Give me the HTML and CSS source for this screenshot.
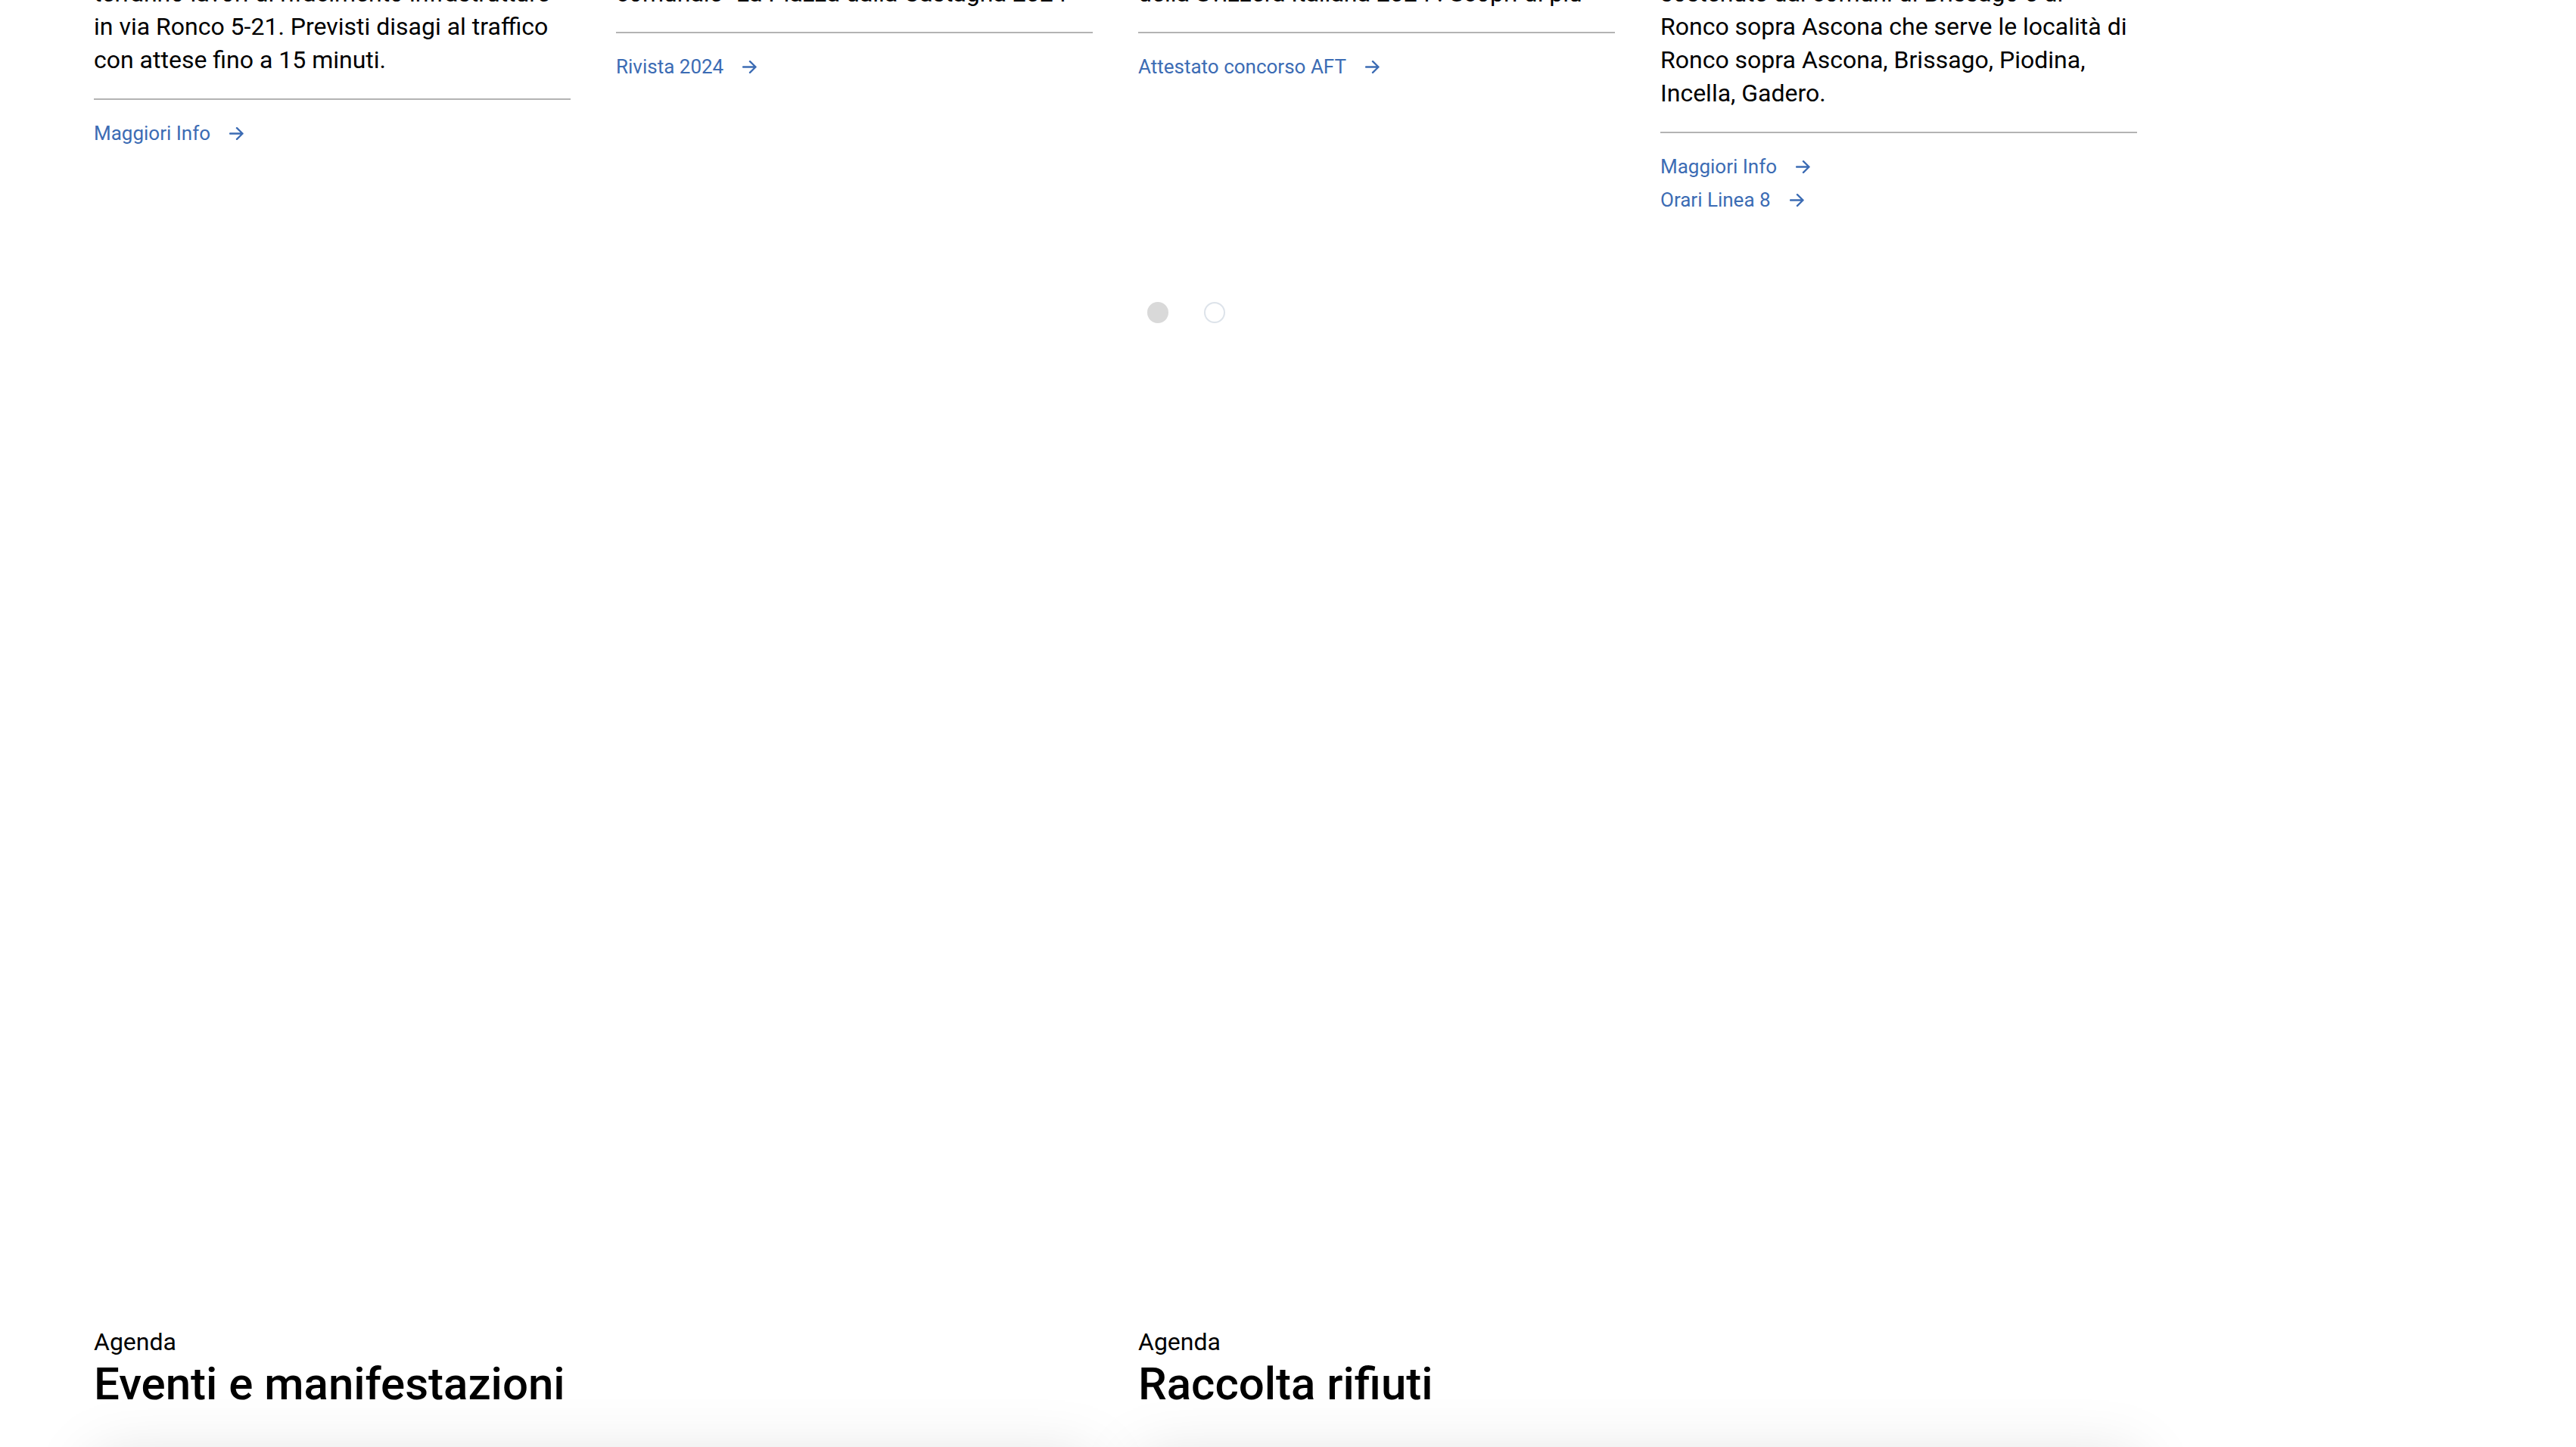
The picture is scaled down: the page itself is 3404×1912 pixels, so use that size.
FILE: index.html
```html
<!DOCTYPE html>
<html lang="it">
<head>
<meta charset="utf-8">
<title>Ronco sopra Ascona</title>
<link rel="stylesheet" href="styles.css">
</head>
<body>
<main class="page">
  <section class="news">
    <article class="card">
      <p class="card-text">terranno lavori di rifacimento infrastrutture in via Ronco 5-21. Previsti disagi al traffico con attese fino a 15 minuti.</p>
      <div class="divider"></div>
      <ul class="links">
        <li><a class="link" href="#">Maggiori Info<svg class="arrow" viewBox="0 0 19 17"><path d="M1 8.5H17.5M10 1.2L17.5 8.5L10 15.8"/></svg></a></li>
      </ul>
    </article>
    <article class="card">
      <p class="card-text">comunale "La Piazza dalla Castagna 2024"</p>
      <div class="divider"></div>
      <ul class="links">
        <li><a class="link" href="#">Rivista 2024<svg class="arrow" viewBox="0 0 19 17"><path d="M1 8.5H17.5M10 1.2L17.5 8.5L10 15.8"/></svg></a></li>
      </ul>
    </article>
    <article class="card">
      <p class="card-text">della Svizzera Italiana 2024 . Scopri di più</p>
      <div class="divider"></div>
      <ul class="links">
        <li><a class="link" href="#">Attestato concorso AFT<svg class="arrow" viewBox="0 0 19 17"><path d="M1 8.5H17.5M10 1.2L17.5 8.5L10 15.8"/></svg></a></li>
      </ul>
    </article>
    <article class="card">
      <p class="card-text">sostenute dai comuni di Brissago e di<br>Ronco sopra Ascona che serve le località di Ronco sopra Ascona, Brissago, Piodina, Incella, Gadero.</p>
      <div class="divider"></div>
      <ul class="links">
        <li><a class="link" href="#">Maggiori Info<svg class="arrow" viewBox="0 0 19 17"><path d="M1 8.5H17.5M10 1.2L17.5 8.5L10 15.8"/></svg></a></li>
        <li><a class="link" href="#">Orari Linea 8<svg class="arrow" viewBox="0 0 19 17"><path d="M1 8.5H17.5M10 1.2L17.5 8.5L10 15.8"/></svg></a></li>
      </ul>
    </article>
  </section>

  <div class="dots">
    <span class="dot dot-active"></span>
    <span class="dot"></span>
  </div>

  <section class="agenda">
    <div class="agenda-col">
      <p class="eyebrow">Agenda</p>
      <h2 class="agenda-title">Eventi e manifestazioni</h2>
      <div class="agenda-card"></div>
    </div>
    <div class="agenda-col">
      <p class="eyebrow">Agenda</p>
      <h2 class="agenda-title">Raccolta rifiuti</h2>
      <div class="agenda-card"></div>
    </div>
  </section>
</main>
</body>
</html>
```

FILE: styles.css
```css
html, body {
  margin: 0;
  padding: 0;
  background: #ffffff;
}

body {
  font-family: Roboto, "Liberation Sans", Arial, sans-serif;
  color: #000000;
  overflow: hidden;
}

.page {
  padding-left: 124px;
  width: 2702px;
}

.news {
  display: grid;
  grid-template-columns: repeat(4, 630px);
  column-gap: 60px;
  align-items: start;
  margin-top: -31px;
}

.card-text {
  margin: 0;
  font-size: 32px;
  line-height: 44px;
  font-weight: 400;
}

.divider {
  height: 2px;
  background: #b3b3b3;
  margin-top: 29px;
}

.links {
  list-style: none;
  margin: 22px 0 0;
  padding: 0;
}

.links li {
  line-height: 44px;
  height: 44px;
}

.link {
  display: inline-flex;
  align-items: center;
  gap: 25px;
  font-size: 26px;
  line-height: 44px;
  color: #3c6cb4;
  text-decoration: none;
}

.arrow {
  width: 19px;
  height: 17px;
  fill: none;
  stroke: #3c6cb4;
  stroke-width: 2.4;
  stroke-linecap: round;
  stroke-linejoin: round;
}

.dots {
  display: flex;
  gap: 47px;
  padding-left: 1392px;
  margin-top: 113px;
}

.dot {
  width: 28px;
  height: 28px;
  border-radius: 50%;
  box-sizing: border-box;
  border: 2.5px solid #dde3ea;
  background: #ffffff;
}

.dot-active {
  background: #d9d9d9;
  border-color: #d9d9d9;
}

.agenda {
  display: grid;
  grid-template-columns: repeat(2, 1320px);
  column-gap: 60px;
  margin-top: 1324px;
}

.eyebrow {
  margin: 0;
  font-size: 32px;
  line-height: 44px;
  font-weight: 400;
}

.agenda-title {
  margin: 0;
  font-size: 60px;
  line-height: 68px;
  font-weight: 500;
}

.agenda-card {
  margin-top: 63px;
  height: 600px;
  background: #ffffff;
  box-shadow: 0 0 80px rgba(0, 0, 0, 0.13);
}
```
